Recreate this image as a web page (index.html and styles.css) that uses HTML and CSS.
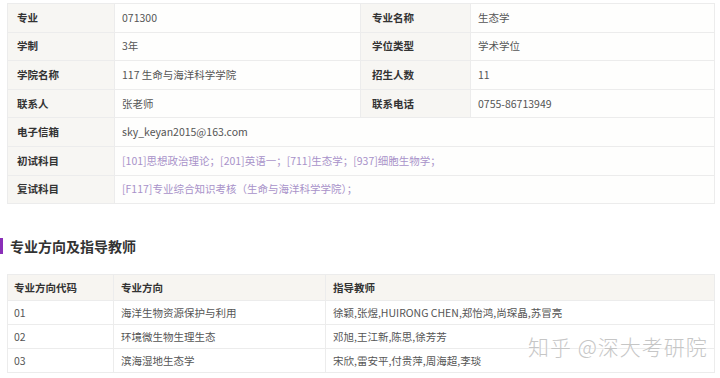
FILE: index.html
```html
<!DOCTYPE html>
<html lang="zh">
<head>
<meta charset="utf-8">
<link rel="stylesheet" href="styles.css">
</head>
<body>
<div class="page">
  <table class="info">
    <colgroup>
      <col class="c1"><col class="c2"><col class="c3"><col class="c4">
    </colgroup>
    <tr><th>专业</th><td>071300</td><th class="lb">专业名称</th><td>生态学</td></tr>
    <tr><th>学制</th><td>3年</td><th class="lb">学位类型</th><td>学术学位</td></tr>
    <tr><th>学院名称</th><td>117 生命与海洋科学学院</td><th class="lb">招生人数</th><td>11</td></tr>
    <tr><th>联系人</th><td>张老师</td><th class="lb">联系电话</th><td>0755-86713949</td></tr>
    <tr><th>电子信箱</th><td colspan="3">sky_keyan2015@163.com</td></tr>
    <tr><th>初试科目</th><td colspan="3" class="link">[101]思想政治理论；[201]英语一；[711]生态学；[937]细胞生物学；</td></tr>
    <tr><th>复试科目</th><td colspan="3" class="link">[F117]专业综合知识考核（生命与海洋科学学院）；</td></tr>
  </table>

  <h2 class="title">专业方向及指导教师</h2>

  <table class="dir">
    <colgroup>
      <col class="d1"><col class="d2"><col class="d3">
    </colgroup>
    <tr class="head"><th>专业方向代码</th><th>专业方向</th><th>指导教师</th></tr>
    <tr><td>01</td><td>海洋生物资源保护与利用</td><td>徐颖,张煜,HUIRONG CHEN,郑怡鸿,尚琛晶,苏冒亮</td></tr>
    <tr><td>02</td><td>环境微生物生理生态</td><td>邓旭,王江新,陈思,徐芳芳</td></tr>
    <tr><td>03</td><td>滨海湿地生态学</td><td>宋欣,雷安平,付贵萍,周海超,李琰</td></tr>
  </table>

  <div class="watermark">知乎 @深大考研院</div>
</div>
</body>
</html>
```

FILE: styles.css
```css
html, body {
  margin: 0;
  padding: 0;
  background: #ffffff;
}
body {
  font-family: "Noto Sans CJK SC", "Noto Sans", sans-serif;
  font-size: 10.5px;
  color: #555;
}
.page {
  position: relative;
  width: 720px;
  height: 378px;
  overflow: hidden;
  padding: 3px 5px 0 7px;
  box-sizing: border-box;
}
table {
  border-collapse: collapse;
  width: 708px;
  table-layout: fixed;
}
.info { border: 1px solid #ececec; }
.info .c1 { width: 107px; }
.info .c2 { width: 246px; }
.info .c3 { width: 110px; }
.info .c4 { width: auto; }
.info tr { height: 28.6px; }
.info th, .info td {
  border: 1px solid #ececec;
  padding: 0 0 1px 9px;
  text-align: left;
  vertical-align: middle;
  white-space: nowrap;
  line-height: 15px;
}
.info th {
  background: #f7f6f3;
  color: #333;
  font-weight: bold;
}
.info th.lb { padding-left: 11px; }
.info td {
  background: #fefefd;
  color: #555;
  padding-left: 7px;
}
.info td.link { color: #a892c9; }

.title {
  margin: 34px 0 0 -7px;
  padding-left: 7px;
  border-left: 3px solid #8a2fb8;
  font-size: 14px;
  line-height: 16px;
  font-weight: bold;
  color: #333;
}

.dir {
  margin-top: 20px;
  border: 1px solid #ececec;
}
.dir .d1 { width: 106px; }
.dir .d2 { width: 212px; }
.dir .d3 { width: auto; }
.dir tr { height: 24px; }
.dir tr.head { height: 26px; }
.dir th, .dir td {
  border: 1px solid #ececec;
  padding: 0 0 1px 7px;
  text-align: left;
  vertical-align: middle;
  white-space: nowrap;
  line-height: 15px;
}
.dir td:first-child, .dir th:first-child { padding-left: 6px; }
.dir tr.head th {
  background: #f7f5f1;
  color: #333;
  font-weight: bold;
}
.dir td { background: #fff; color: #555; }

.watermark {
  position: absolute;
  left: 528px;
  top: 333px;
  white-space: nowrap;
  font-size: 21px;
  line-height: 27px;
  font-weight: 300;
  color: #c6c6c6;
  letter-spacing: 1px;
  text-shadow: 0 0 2px #fff, 0 0 1px #fff;
}
```
